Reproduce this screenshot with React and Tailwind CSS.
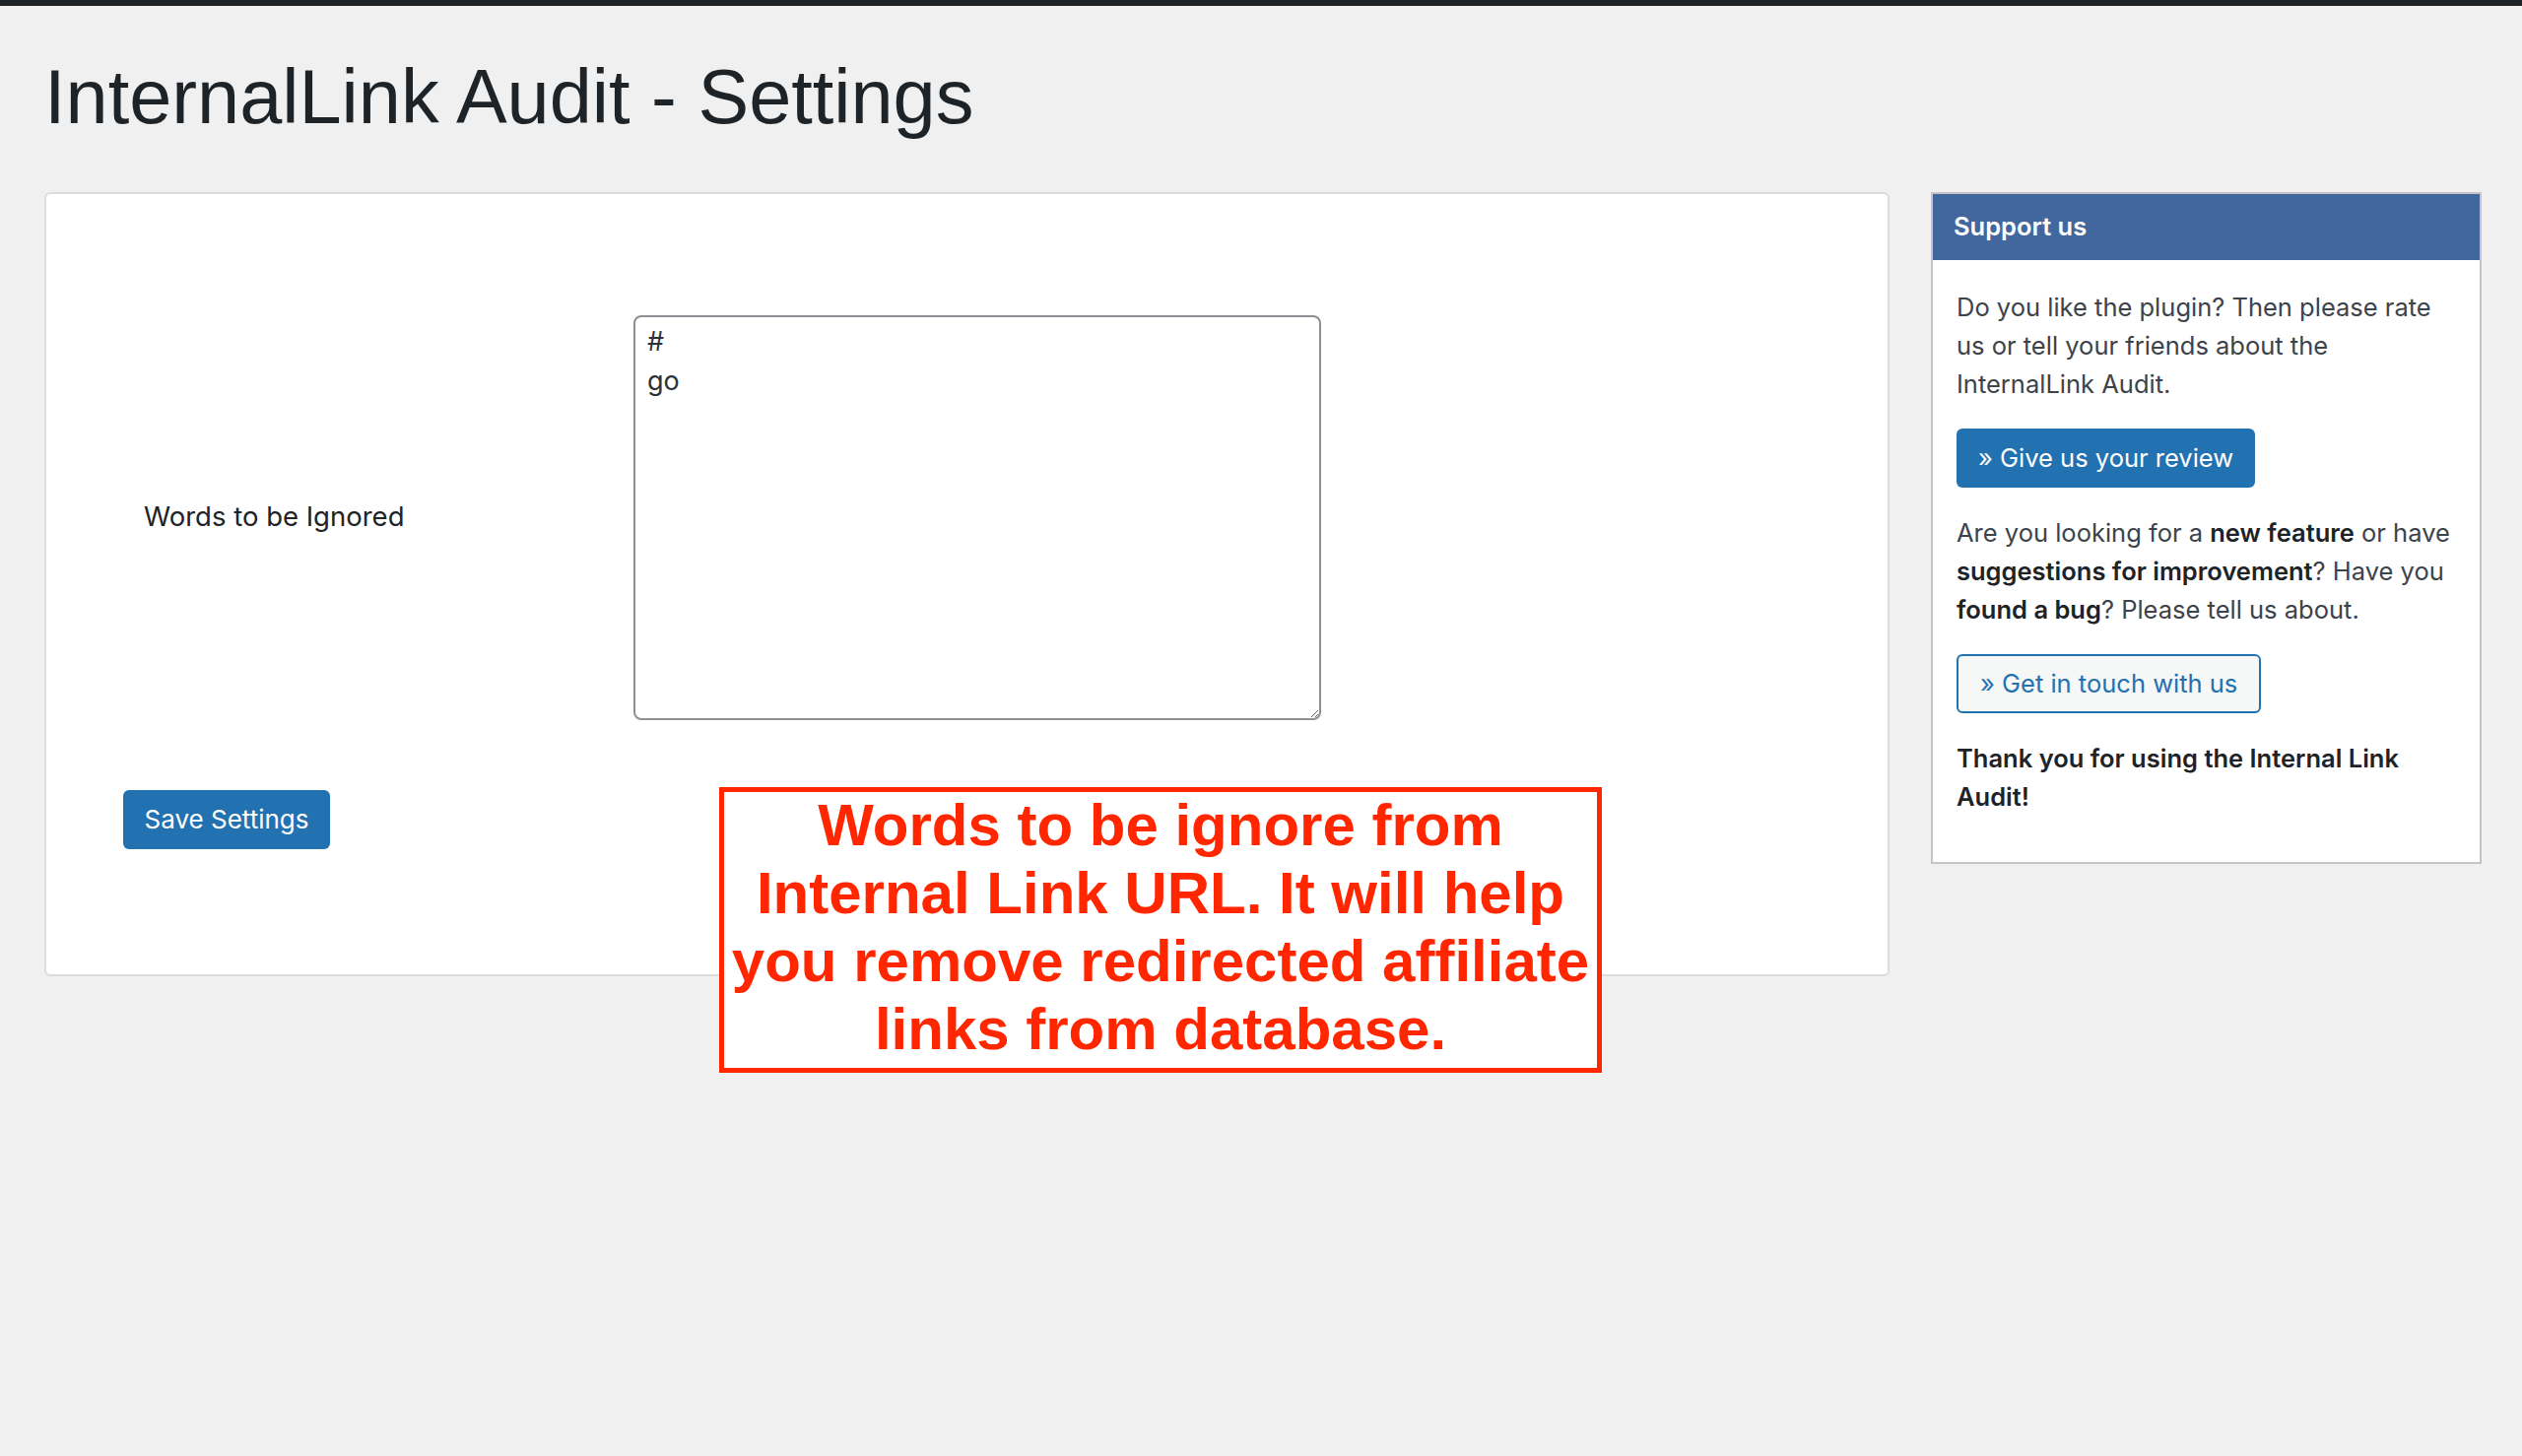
import React from 'react';

const SANS = "font-['Inter','Noto_Sans',sans-serif]";

const Sidebar = () => (
  <div className="w-[559px] shrink-0 border-2 border-[#c3c4c7] bg-white">
    <div className="h-[67px] bg-[#41679e] pl-[21px] flex items-center">
      <h2 className="text-[25.5px] font-semibold text-white">Support us</h2>
    </div>
    <div className="flex flex-col items-start gap-[26px] px-6 pt-[28px] pb-[47px] text-[25.5px] leading-[39px] text-[#3c434a]">
      <p>Do you like the plugin? Then please rate us or tell your friends about the InternalLink Audit.</p>
      <button className="h-[60px] px-[22px] rounded-[6px] bg-[#2271b1] text-white text-[25.5px]">» Give us your review</button>
      <p>
        Are you looking for a <b className="font-semibold text-[#1d2327]">new feature</b> or have{' '}
        <b className="font-semibold text-[#1d2327]">suggestions for improvement</b>? Have you{' '}
        <b className="font-semibold text-[#1d2327]">found a bug</b>? Please tell us about.
      </p>
      <button className="h-[60px] px-[22px] rounded-[6px] border-2 border-[#2271b1] bg-[#f6f7f7] text-[#2271b1] text-[25.5px]">» Get in touch with us</button>
      <p className="font-semibold text-[#1d2327]">Thank you for using the Internal Link Audit!</p>
    </div>
  </div>
);

export default function App() {
  return (
    <div className={`relative min-h-[1478px] bg-[#f0f0f1] ${SANS}`}>
      <div className="h-[6px] bg-[#1d2327]" />

      <h1 className="mt-[54px] ml-[45px] text-[77.5px] leading-none text-[#1d2327] font-['Liberation_Sans',Arial,sans-serif]">
        InternalLink Audit - Settings
      </h1>

      <div className="mt-[57px] flex items-start gap-[42px] pl-[45px] pr-[41px]">
        {/* settings card */}
        <div className="flex-1 border-2 border-[#dcdcde] rounded-[6px] bg-white pl-[78px] pt-[123px] pb-[127px]">
          <div className="flex items-center pl-[21px]">
            <label className="w-[497px] text-[27.5px] text-[#1d2327]">Words to be Ignored</label>
            <textarea
              readOnly
              defaultValue={'#\ngo'}
              className="w-[698px] h-[411px] border-2 border-[#8c8f94] rounded-[8px] px-3 py-[5px] text-[27px] leading-[40px] text-[#2c3338] bg-white outline-none"
            />
          </div>
          <button className="mt-[71px] h-[60px] w-[210px] rounded-[6px] bg-[#2271b1] text-white text-[26px]">Save Settings</button>
        </div>

        <Sidebar />
      </div>

      {/* annotation overlay */}
      <div className="absolute left-[730px] top-[799px] w-[896px] h-[290px] border-[5px] border-[#ff2600] bg-white flex items-center justify-center pb-[6px]">
        <p className="text-center whitespace-nowrap text-[60px] leading-[69px] font-bold text-[#ff2600] font-['Liberation_Sans',Arial,sans-serif]">
          Words to be ignore from<br />
          Internal Link URL. It will help<br />
          you remove redirected affiliate<br />
          links from database.
        </p>
      </div>
    </div>
  );
}
